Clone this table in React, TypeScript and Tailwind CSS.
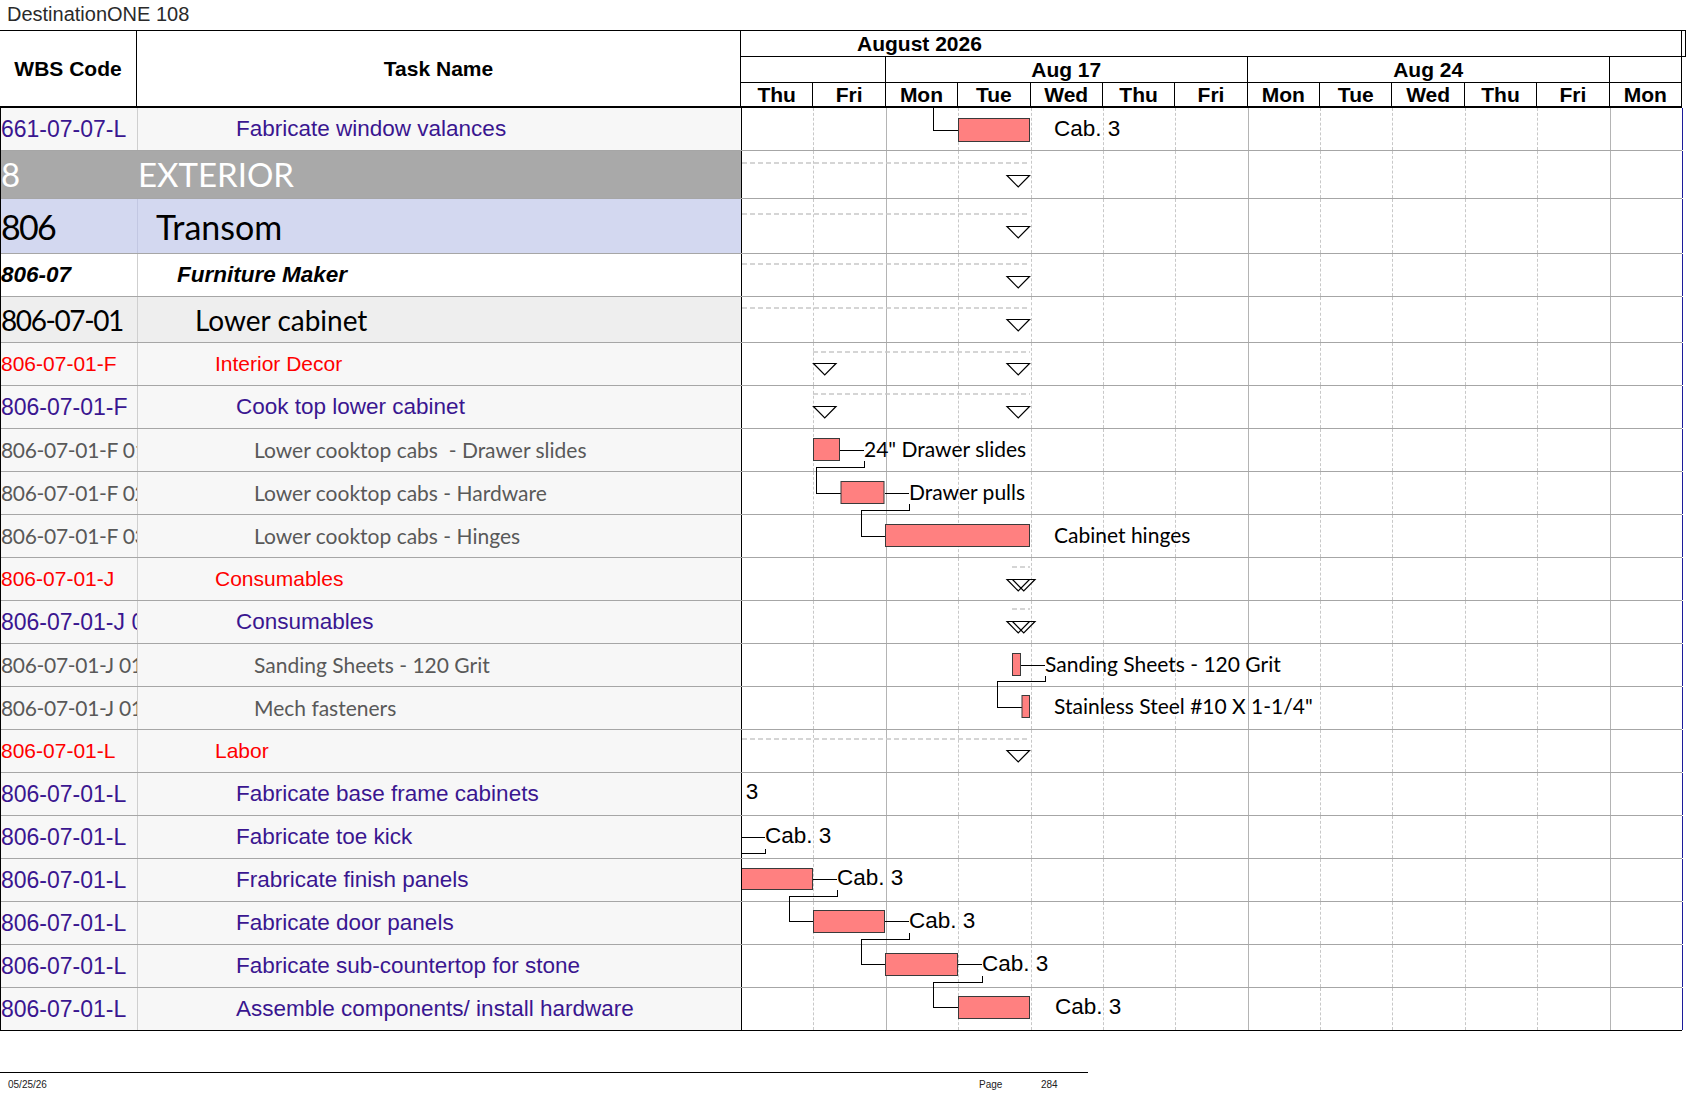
import React from "react";

type Kind = "task" | "exterior" | "transom" | "maker" | "lower" | "section" | "sub";

type TaskRow = {
  wbs: string;
  name: string;
  kind: Kind;
  h?: string;
};

const ARIAL = "font-['Liberation_Sans',Arial,sans-serif]";

// row look by outline level (code = WBS cell, text = task name cell)
const kindStyle: Record<Kind, { bg: string; code: string; text: string; indent: string; sep: string }> = {
  task: {
    bg: "bg-[#f7f7f7]",
    code: "font-['Liberation_Sans',Arial,sans-serif] text-[23px] text-[#3a1690]",
    text: "font-['Liberation_Sans',Arial,sans-serif] text-[22.5px] text-[#3a1690]",
    indent: "pl-[98px]",
    sep: "border-[#cfcfcf]",
  },
  exterior: {
    bg: "bg-[#a9a9a9]",
    code: "font-['Lato',sans-serif] text-[33px] tracking-[-0.05em] text-white",
    text: "font-['Lato',sans-serif] text-[33px] text-white",
    indent: "pl-0",
    sep: "border-[#a9a9a9]",
  },
  transom: {
    bg: "bg-[#d3d8f0]",
    code: "font-['Lato',sans-serif] text-[34px] tracking-[-0.05em] text-black",
    text: "font-['Lato',sans-serif] text-[34px] text-black",
    indent: "pl-[18px]",
    sep: "border-[#c2c7e2]",
  },
  maker: {
    bg: "bg-white",
    code: "font-['Liberation_Sans',Arial,sans-serif] text-[22.5px] font-bold italic text-black",
    text: "font-['Liberation_Sans',Arial,sans-serif] text-[22.5px] font-bold italic text-black",
    indent: "pl-[39px]",
    sep: "border-[#cfcfcf]",
  },
  lower: {
    bg: "bg-[#eeeeee]",
    code: "font-['Lato',sans-serif] text-[28px] tracking-[-0.05em] text-black",
    text: "font-['Lato',sans-serif] text-[28px] text-black",
    indent: "pl-[57px]",
    sep: "border-[#cfcfcf]",
  },
  section: {
    bg: "bg-[#f7f7f7]",
    code: "font-['Liberation_Sans',Arial,sans-serif] text-[21px] text-[#ff0000]",
    text: "font-['Liberation_Sans',Arial,sans-serif] text-[21px] text-[#ff0000]",
    indent: "pl-[77px]",
    sep: "border-[#cfcfcf]",
  },
  sub: {
    bg: "bg-[#f7f7f7]",
    code: "font-['Lato',sans-serif] text-[21px] tracking-[-0.015em] text-[#595959]",
    text: "font-['Lato',sans-serif] text-[21px] text-[#595959]",
    indent: "pl-[116px]",
    sep: "border-[#cfcfcf]",
  },
};

const rows: TaskRow[] = [
  { wbs: "661-07-07-L", name: "Fabricate window valances", kind: "task" },
  { wbs: "8", name: "EXTERIOR", kind: "exterior", h: "h-[48px]" },
  { wbs: "806", name: "Transom", kind: "transom", h: "h-[55px]" },
  { wbs: "806-07", name: "Furniture Maker", kind: "maker" },
  { wbs: "806-07-01", name: "Lower cabinet", kind: "lower", h: "h-[46px]" },
  { wbs: "806-07-01-F", name: "Interior Decor", kind: "section" },
  { wbs: "806-07-01-F", name: "Cook top lower cabinet", kind: "task" },
  { wbs: "806-07-01-F 01", name: "Lower cooktop cabs  - Drawer slides", kind: "sub" },
  { wbs: "806-07-01-F 02", name: "Lower cooktop cabs - Hardware", kind: "sub" },
  { wbs: "806-07-01-F 03", name: "Lower cooktop cabs - Hinges", kind: "sub" },
  { wbs: "806-07-01-J", name: "Consumables", kind: "section" },
  { wbs: "806-07-01-J 01", name: "Consumables", kind: "task" },
  { wbs: "806-07-01-J 01.1", name: "Sanding Sheets - 120 Grit", kind: "sub" },
  { wbs: "806-07-01-J 01.2", name: "Mech fasteners", kind: "sub" },
  { wbs: "806-07-01-L", name: "Labor", kind: "section" },
  { wbs: "806-07-01-L", name: "Fabricate base frame cabinets", kind: "task" },
  { wbs: "806-07-01-L", name: "Fabricate toe kick", kind: "task" },
  { wbs: "806-07-01-L", name: "Frabricate finish panels", kind: "task" },
  { wbs: "806-07-01-L", name: "Fabricate door panels", kind: "task" },
  { wbs: "806-07-01-L", name: "Fabricate sub-countertop for stone", kind: "task" },
  { wbs: "806-07-01-L", name: "Assemble components/ install hardware", kind: "task" },
];

const days = ["Thu", "Fri", "Mon", "Tue", "Wed", "Thu", "Fri", "Mon", "Tue", "Wed", "Thu", "Fri", "Mon"];

const gridBorder = (i: number) => {
  if (i === 12) return "border-r border-[#1c1c9a]";
  if (i === 1 || i === 6 || i === 11) return "border-r border-[#b4b4b4]";
  return "border-r border-dashed border-[#c8c8c8]";
};

// gantt drawing, page coordinates (chart body starts at x 741, y 107)
const bars = [
  [957, 1029, 117, 141],
  [812, 839, 437, 460],
  [839.5, 883.5, 480, 503],
  [884, 1029, 523, 546],
  [1011, 1020, 652, 675],
  [1020.5, 1029, 694, 717],
  [700, 812, 867, 889],
  [812, 884, 909, 932],
  [884, 957, 952, 975],
  [957, 1029, 995, 1018],
];

const leaders = [
  [839, 863, 449],
  [883.5, 908, 492],
  [1020, 1044, 664],
  [740, 764, 836],
  [812, 836, 878],
  [884, 908, 920.5],
  [957, 981, 963.5],
];

const links = [
  "M932 107 V129 H957",
  "M863 460 V466 H815 V492 H839.5",
  "M908 503 V509 H860.5 V535 H884",
  "M1044 675 V680 H996 V706 H1020.5",
  "M764 848 V852 H700",
  "M836 889 V895 H788 V920.5 H812",
  "M908 932 V938 H860.5 V963.5 H884",
  "M981 975 V981 H932.5 V1006.5 H957",
];

// summary rows: dashed span, start / end markers
const summaries: { y: number; x1: number; x2: number; t: number; start?: number }[] = [
  { y: 162, x1: 741, x2: 1029, t: 174 },
  { y: 213, x1: 741, x2: 1029, t: 225 },
  { y: 263, x1: 741, x2: 1029, t: 275 },
  { y: 307, x1: 741, x2: 1029, t: 318 },
  { y: 351, x1: 812, x2: 1029, t: 362, start: 812 },
  { y: 393, x1: 812, x2: 1029, t: 405, start: 812 },
  { y: 566, x1: 1011, x2: 1029, t: 578, start: 1011 },
  { y: 608, x1: 1011, x2: 1029, t: 620, start: 1011 },
  { y: 738, x1: 741, x2: 1029, t: 749 },
];

const labels: { x: number; cy: number; text: string; lato?: boolean }[] = [
  { x: 1053, cy: 129, text: "Cab. 3" },
  { x: 863, cy: 448.5, text: '24" Drawer slides', lato: true },
  { x: 908, cy: 491.5, text: "Drawer pulls", lato: true },
  { x: 1053, cy: 534.5, text: "Cabinet hinges", lato: true },
  { x: 1044, cy: 663.5, text: "Sanding Sheets - 120 Grit", lato: true },
  { x: 1053, cy: 705.5, text: 'Stainless Steel #10 X 1-1/4"', lato: true },
  { x: 691, cy: 792, text: "Cab. 3" },
  { x: 764, cy: 835.5, text: "Cab. 3" },
  { x: 836, cy: 878, text: "Cab. 3" },
  { x: 908, cy: 920.5, text: "Cab. 3" },
  { x: 981, cy: 963.5, text: "Cab. 3" },
  { x: 1054, cy: 1006.5, text: "Cab. 3" },
];

const GanttOverlay = () => (
  <div className="absolute left-[741px] top-0 w-[940px] h-[922px] overflow-hidden pointer-events-none">
    <svg className="absolute inset-0" width={940} height={922} viewBox="741 107 940 922">
      {summaries.map((s, i) => (
        <g key={i}>
          <line x1={s.x1} x2={s.x2} y1={s.y} y2={s.y} stroke="#c8c8c8" strokeWidth={1.6} strokeDasharray="5 3" />
          {s.start !== undefined && (
            <polygon
              points={`${s.start + 0.5},${s.t + 0.5} ${s.start + 23},${s.t + 0.5} ${s.start + 11.75},${s.t + 12}`}
              fill="none"
              stroke="#000"
              strokeWidth={1.2}
            />
          )}
          <polygon
            points={`${s.x2 - 23},${s.t + 0.5} ${s.x2 - 0.5},${s.t + 0.5} ${s.x2 - 11.75},${s.t + 12}`}
            fill="none"
            stroke="#000"
            strokeWidth={1.2}
          />
        </g>
      ))}
      {links.map((d, i) => (
        <path key={i} d={d} fill="none" stroke="#000" strokeWidth={1} shapeRendering="crispEdges" />
      ))}
      {leaders.map(([a, b, y], i) => (
        <line key={i} x1={a} x2={b} y1={y} y2={y} stroke="#000" strokeWidth={1} shapeRendering="crispEdges" />
      ))}
      {bars.map(([a, b, t, u], i) => (
        <rect
          key={i}
          x={a + 0.5}
          y={t + 0.5}
          width={b - a - 1}
          height={u - t - 1}
          fill="#ff8080"
          stroke="#3a3a3a"
          strokeWidth={1}
        />
      ))}
    </svg>
    {labels.map((l, i) => (
      <span
        key={i}
        className={`absolute whitespace-nowrap leading-[26px] text-black ${
          l.lato ? "font-['Lato',sans-serif] text-[21px]" : "font-['Liberation_Sans',Arial,sans-serif] text-[22.5px]"
        }`}
        style={{ left: l.x - 741, top: l.cy - 107 - 14 }}
      >
        {l.text}
      </span>
    ))}
  </div>
);

const BodyRow = ({ row, last }: { row: TaskRow; last: boolean }) => {
  const s = kindStyle[row.kind];
  return (
    <div className={`flex ${row.h ?? "h-[43px]"} border-b ${last ? "border-black" : "border-[#a6a6a6]"}`}>
      <div
        className={`w-[137px] shrink-0 flex items-center overflow-hidden whitespace-nowrap border-r ${s.sep} ${s.bg} ${s.code}`}
      >
        {row.wbs}
      </div>
      <div
        className={`w-[604px] shrink-0 flex items-center overflow-hidden whitespace-pre border-r border-black ${s.bg} ${s.text} ${s.indent}`}
      >
        {row.name}
      </div>
      <div className="w-[941px] shrink-0 grid grid-cols-[repeat(13,minmax(0,1fr))] bg-white">
        {days.map((_, i) => (
          <div key={i} className={gridBorder(i)} />
        ))}
      </div>
    </div>
  );
};

const App: React.FC = () => {
  return (
    <div className={`w-[1687px] h-[1097px] bg-white overflow-hidden text-black ${ARIAL}`}>
      <div className="h-[30px] pl-[7px] text-[20px] leading-[28px] text-[#2a2a2a]">DestinationONE 108</div>

      {/* header */}
      <div className="flex w-[1686px] border-t border-black">
        <div className="w-[137px] h-[77px] border-r border-b-2 border-black flex items-center justify-center font-bold text-[21px]">
          WBS Code
        </div>
        <div className="w-[604px] h-[77px] border-r border-b-2 border-black flex items-center justify-center font-bold text-[21px]">
          Task Name
        </div>
        <div className="w-[945px] flex flex-col font-bold text-[21px] leading-[22px]">
          <div className="flex h-[26px] border-b border-black">
            <div className="w-[941px] border-r border-black pl-[116px] flex items-center">August 2026</div>
            <div className="w-[4px] border-r border-black" />
          </div>
          <div className="w-[941px] h-[26px] grid grid-cols-[repeat(13,minmax(0,1fr))] border-b border-black">
            <div className="col-span-2 border-r border-black" />
            <div className="col-span-5 border-r border-black flex items-center justify-center">Aug 17</div>
            <div className="col-span-5 border-r border-black flex items-center justify-center">Aug 24</div>
            <div className="col-span-1 border-r border-black" />
          </div>
          <div className="w-[941px] h-[25px] grid grid-cols-[repeat(13,minmax(0,1fr))] border-b-2 border-black">
            {days.map((d, i) => (
              <div key={i} className="border-r border-black flex items-center justify-center">
                {d}
              </div>
            ))}
          </div>
        </div>
      </div>

      {/* body */}
      <div className="relative w-[1682px] border-l border-black">
        {rows.map((r, i) => (
          <BodyRow key={i} row={r} last={i === rows.length - 1} />
        ))}
        <GanttOverlay />
      </div>

      {/* footer */}
      <div className="mt-[41px] w-[1088px] border-t border-black">
        <div className="flex mt-[6px] text-[10px] leading-[12px] text-[#222]">
          <span className="ml-[8px] w-[971px]">05/25/26</span>
          <span className="w-[62px]">Page</span>
          <span>284</span>
        </div>
      </div>
    </div>
  );
};

export default App;
